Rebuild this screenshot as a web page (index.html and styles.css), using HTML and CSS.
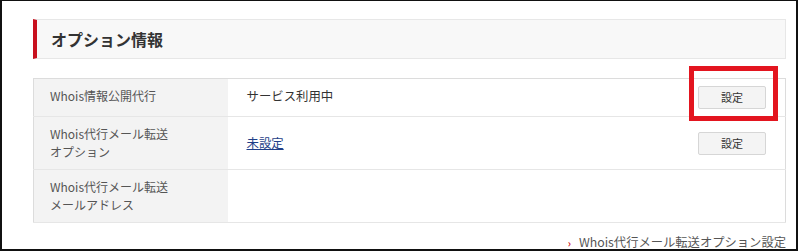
FILE: index.html
```html
<!DOCTYPE html>
<html lang="ja">
<head>
<meta charset="utf-8">
<title>オプション情報</title>
<link rel="stylesheet" href="styles.css">
</head>
<body>
<div class="frame">
  <section class="section">
    <h2 class="heading">オプション情報</h2>
    <table class="info">
      <tr class="row-1">
        <th>Whois情報公開代行</th>
        <td class="value">サービス利用中</td>
        <td class="action"><button class="btn" type="button">設定</button></td>
      </tr>
      <tr class="row-2">
        <th>Whois代行メール転送<br>オプション</th>
        <td class="value"><a class="link" href="#">未設定</a></td>
        <td class="action"><button class="btn" type="button">設定</button></td>
      </tr>
      <tr class="row-3">
        <th>Whois代行メール転送<br>メールアドレス</th>
        <td class="value"></td>
        <td class="action"></td>
      </tr>
    </table>
    <div class="more"><a class="more-link" href="#"><span class="chev">›</span>Whois代行メール転送オプション設定</a></div>
  </section>
  <div class="highlight"></div>
</div>
</body>
</html>
```

FILE: styles.css
```css
* { box-sizing: border-box; }
html, body { margin: 0; padding: 0; background: #fff; }
body {
  font-family: "Noto Sans CJK JP", "Noto Sans", sans-serif;
  color: #444;
}
.frame {
  position: relative;
  width: 798px;
  height: 251px;
  border: 2px solid #111;
  border-top-width: 1px;
  padding: 18px 10px 0 31px;
  overflow: hidden;
}
.heading {
  margin: 0 0 19px;
  height: 40px;
  background: #f8f8f8;
  border: 1px solid #e7e7e7;
  border-left: 4px solid #c8101e;
  padding-left: 14px;
  font-size: 16px;
  font-weight: bold;
  line-height: 38px;
  color: #333;
}
.info {
  width: 100%;
  border-collapse: collapse;
  border: 1px solid #dcdcdc;
  font-size: 12px;
  line-height: 18px;
}
.info tr { border-bottom: 1px solid #e6e6e6; }
.info th {
  width: 194px;
  background: #f3f3f3;
  text-align: left;
  font-weight: normal;
  color: #555;
  padding: 7px 16px;
  vertical-align: middle;
}
.info td { padding: 7px 0; vertical-align: middle; }
.info .row-1 th, .info .row-1 td { height: 38px; padding-top: 5px; padding-bottom: 8px; }
.info .row-1 .action { padding-top: 7px; padding-bottom: 7px; }
.info .row-2 th { height: 53px; }
.info .row-3 th { height: 53px; }
.info .value { padding-left: 19px; font-size: 12.4px; color: #333; }
.info .action { width: 100px; text-align: right; padding-right: 19px; }
.link { color: #1f3f88; text-decoration: underline; }
.btn {
  display: inline-block;
  width: 68px;
  height: 23px;
  border: 1px solid #d6d6d6;
  border-radius: 2px;
  background: #f4f4f4;
  font-family: inherit;
  font-size: 11px;
  color: #333;
  padding: 0;
  line-height: 21px;
  vertical-align: middle;
}
.more {
  text-align: right;
  padding-top: 11px;
  font-size: 12.3px;
  line-height: 16px;
}
.more-link { color: #555; text-decoration: none; }
.chev { color: #d0121b; margin-right: 8px; font-weight: bold; font-size: 10px; }
.highlight {
  position: absolute;
  left: 687px;
  top: 65px;
  width: 89px;
  height: 55px;
  border: 5px solid #e3151f;
}
```
